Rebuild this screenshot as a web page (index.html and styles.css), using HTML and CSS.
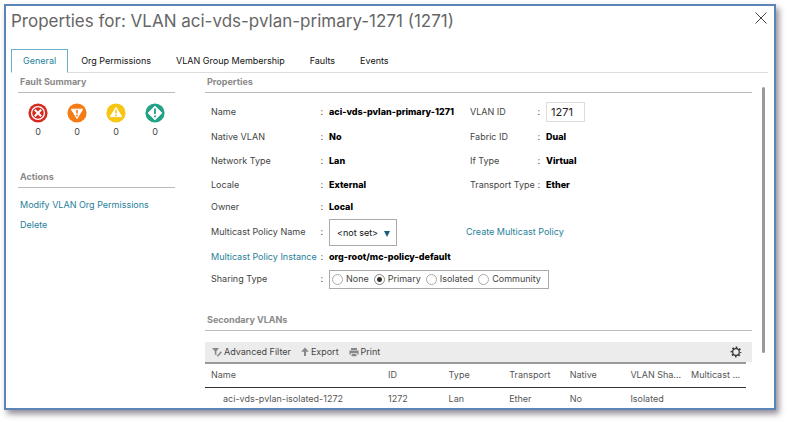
FILE: index.html
```html
<!DOCTYPE html>
<html lang="en">
<head>
  <meta charset="UTF-8" />
  <meta name="viewport" content="width=device-width, initial-scale=1" />
  <title>VLAN Properties</title>
  <link rel="stylesheet" href="styles.css">
</head>
<body>
  <div class="dialog" role="dialog" aria-labelledby="dialogTitle">
    <header class="dialog-header">
      <h1 id="dialogTitle">Properties for: VLAN aci-vds-pvlan-primary-1271 (1271)</h1>
      <button type="button" class="btn-close" aria-label="Close">
        <svg width="12" height="12" viewBox="0 0 12 12"><path d="M0.5 0.5 L11.5 11.5 M11.5 0.5 L0.5 11.5" /></svg>
      </button>
    </header>

    <nav class="tabs">
      <button type="button" class="tab active">General</button>
      <button type="button" class="tab">Org Permissions</button>
      <button type="button" class="tab">VLAN Group Membership</button>
      <button type="button" class="tab">Faults</button>
      <button type="button" class="tab">Events</button>
    </nav>

    <div class="dialog-body">
      <aside class="sidebar">
        <h2>Fault Summary</h2>
        <ul class="faults">
          <li>
            <svg width="20" height="20" viewBox="0 0 20 20">
              <circle cx="10" cy="10" r="9.6" fill="#d52b1e" />
              <circle cx="10" cy="10" r="6.4" fill="#d52b1e" stroke="#fff" stroke-width="1.3" />
              <path d="M6.8 6.8 L13.2 13.2 M13.2 6.8 L6.8 13.2" stroke="#fff" stroke-width="2" />
            </svg>
            <span>0</span>
          </li>
          <li>
            <svg width="20" height="20" viewBox="0 0 20 20">
              <circle cx="10" cy="10" r="9.6" fill="#f57c14" />
              <path d="M4.3 6.2 H15.7 L10 15.6 Z" fill="#fff" stroke="#fff" stroke-linejoin="round" />
              <path d="M10 7 V10.6 M10 11.8 V13.4" stroke="#f57c14" stroke-width="1.6" />
            </svg>
            <span>0</span>
          </li>
          <li>
            <svg width="20" height="20" viewBox="0 0 20 20">
              <circle cx="10" cy="10" r="9.6" fill="#f8c512" />
              <path d="M4.3 13.6 H15.7 L10 4.4 Z" fill="#fff" stroke="#fff" stroke-linejoin="round" />
              <path d="M10 6.8 V10.6 M10 11.6 V13.2" stroke="#f8c512" stroke-width="1.6" />
            </svg>
            <span>0</span>
          </li>
          <li>
            <svg width="20" height="20" viewBox="0 0 20 20">
              <circle cx="10" cy="10" r="9.6" fill="#23a287" />
              <path d="M10 3.2 L16.8 10 L10 16.8 L3.2 10 Z" fill="#fff" stroke="#fff" stroke-linejoin="round" />
              <path d="M10 5.4 V11 M10 12.4 V14.2" stroke="#23a287" stroke-width="1.8" />
            </svg>
            <span>0</span>
          </li>
        </ul>

        <h2>Actions</h2>
        <ul class="actions">
          <li><a href="#">Modify VLAN Org Permissions</a></li>
          <li><a href="#">Delete</a></li>
        </ul>
      </aside>

      <main class="content">
        <h2>Properties</h2>
        <form class="props">
          <div class="label">Name<span>:</span></div>
          <b>aci-vds-pvlan-primary-1271</b>
          <div class="label second"><label for="vlanId">VLAN ID</label><span>:</span></div>
          <div><input type="text" id="vlanId" value="1271" /></div>

          <div class="label">Native VLAN<span>:</span></div>
          <b>No</b>
          <div class="label second">Fabric ID<span>:</span></div>
          <b>Dual</b>

          <div class="label">Network Type<span>:</span></div>
          <b>Lan</b>
          <div class="label second">If Type<span>:</span></div>
          <b>Virtual</b>

          <div class="label">Locale<span>:</span></div>
          <b>External</b>
          <div class="label second">Transport Type<span>:</span></div>
          <b>Ether</b>

          <div class="label">Owner<span>:</span></div>
          <b class="wide">Local</b>

          <div class="label"><label for="policyName">Multicast Policy Name</label><span>:</span></div>
          <div class="select">
            <select id="policyName">
              <option>&lt;not set&gt;</option>
            </select>
            <svg width="6" height="6" viewBox="0 0 6 6"><path d="M0 0 H6 L3 6 Z" fill="#1b5e7e" /></svg>
          </div>
          <a href="#" class="create">Create Multicast Policy</a>

          <div class="label"><a href="#">Multicast Policy Instance</a><span>:</span></div>
          <b class="wide">org-root/mc-policy-default</b>

          <div class="label">Sharing Type<span>:</span></div>
          <div class="wide">
            <div class="radios" role="radiogroup" aria-label="Sharing Type">
              <label><input type="radio" name="sharing" />None</label>
              <label><input type="radio" name="sharing" checked />Primary</label>
              <label><input type="radio" name="sharing" />Isolated</label>
              <label><input type="radio" name="sharing" />Community</label>
            </div>
          </div>
        </form>

        <h2>Secondary VLANs</h2>
        <div class="toolbar">
          <button type="button">
            <svg width="10" height="10" viewBox="0 0 10 10"><path d="M0 1 H7 L4.4 4.2 V8.4 L2.8 7.2 V4.2 Z" fill="#888" /><path d="M5.4 9.2 L9.4 4.8" stroke="#888" stroke-width="1.6" /></svg>
            Advanced Filter
          </button>
          <button type="button">
            <svg width="8" height="10" viewBox="0 0 8 10"><path d="M4 0.6 L7.8 4.8 H5 V9 H3 V4.8 H0.2 Z" fill="#888" /></svg>
            Export
          </button>
          <button type="button">
            <svg width="10" height="10" viewBox="0 0 10 10"><path d="M2 1 H8 V3 H2 Z M0.4 3.6 H9.6 V7.4 H8.2 V6 H1.8 V7.4 H0.4 Z M2.6 6.8 H7.4 V9.2 H2.6 Z" fill="#888" /></svg>
            Print
          </button>
          <button type="button" class="settings" aria-label="Settings">
            <svg width="12" height="12" viewBox="0 0 12 12"><circle cx="6" cy="6" r="3.3" fill="none" stroke="#333" stroke-width="1.2" /><circle cx="6" cy="6" r="4.6" fill="none" stroke="#333" stroke-width="1.6" stroke-dasharray="1.7 1.913" stroke-dashoffset="0.85" /></svg>
          </button>
        </div>
        <table>
          <thead>
            <tr>
              <th class="name">Name</th>
              <th>ID</th>
              <th>Type</th>
              <th>Transport</th>
              <th>Native</th>
              <th>VLAN Sha...</th>
              <th class="last">Multicast ...</th>
            </tr>
          </thead>
          <tbody>
            <tr>
              <td class="name">aci-vds-pvlan-isolated-1272</td>
              <td>1272</td>
              <td>Lan</td>
              <td>Ether</td>
              <td>No</td>
              <td>Isolated</td>
              <td></td>
            </tr>
          </tbody>
        </table>
      </main>

      <div class="scrollbar"><div class="thumb"></div></div>
    </div>
  </div>
</body>
</html>
```
FILE: styles.css
```css
* {
  box-sizing: border-box;
}
body {
  margin: 0;
  padding: 4px 12px 12px 4px;
  height: 100vh;
  background: #fff;
  font-family: Inter, "Liberation Sans", sans-serif;
  font-size: 9px;
  line-height: 14px;
  color: #444;
}
ul {
  list-style: none;
  margin: 0;
  padding: 0;
}
a {
  color: #26809a;
  text-decoration: none;
}
button {
  border: none;
  background: none;
  padding: 0;
  font: inherit;
  color: inherit;
  cursor: pointer;
}
.dialog {
  display: flex;
  flex-direction: column;
  height: 100%;
  border: 2px solid #5b84b8;
  background: #fff;
  box-shadow: 3px 4px 6px rgba(60, 50, 70, 0.55);
  overflow: hidden;
}
.dialog-header {
  display: flex;
  justify-content: space-between;
  align-items: flex-start;
  padding: 3px 7px 0 5px;
  height: 43px;
}
h1 {
  margin: 0;
  font-size: 17px;
  line-height: 24px;
  font-weight: 400;
  color: #666;
}
.btn-close {
  display: flex;
  padding-top: 3px;
}
.btn-close svg {
  stroke: #444;
  stroke-width: 1;
}
.tabs {
  display: flex;
  gap: 1px;
  margin: 0 6px 0 5px;
  border-bottom: 1px solid #ddd;
}
.tab {
  height: 24px;
  padding: 0 12px;
  margin-bottom: -1px;
  color: #111;
}
.tab.active {
  padding: 0 11px;
  border: 1px solid #6aaecb;
  border-bottom-color: #fff;
  background: #fff;
  color: #26809a;
}
.dialog-body {
  display: flex;
  flex: 1;
  min-height: 0;
  padding-left: 12px;
}
h2 {
  margin: 0;
  padding: 2px 2px 3px;
  border-bottom: 1px solid #bbb;
  font-size: 9px;
  line-height: 14px;
  font-weight: 700;
  color: #8a8a8a;
}
.sidebar {
  width: 157px;
  margin-right: 30px;
}
.faults {
  display: flex;
  gap: 19px;
  padding: 10px 10px 29px;
}
.faults li {
  display: flex;
  flex-direction: column;
  align-items: center;
  gap: 2px;
}
.actions {
  padding: 10px 2px;
}
.actions li {
  margin-bottom: 6px;
}
.content {
  flex: 1;
}
.props {
  display: grid;
  grid-template-columns: 118px 137px 80px 1fr;
  grid-template-rows: 26px 24px 24px 24px 20px 30px 20px 24px;
  align-items: center;
  padding: 6px 6px 20px;
}
.props b {
  font-weight: 800;
  color: #000;
  white-space: nowrap;
}
.label {
  display: flex;
  justify-content: space-between;
  padding-right: 6px;
  white-space: nowrap;
}
.second {
  padding-left: 4px;
}
.wide {
  grid-column: span 3;
}
.create {
  grid-column: span 2;
}
#vlanId {
  display: block;
  width: 39px;
  height: 20px;
  padding: 0 4px;
  border: 1px solid #ddd;
  font: inherit;
  font-size: 11px;
  color: #222;
}
.select {
  position: relative;
  width: 68px;
}
.select select {
  display: block;
  appearance: none;
  width: 100%;
  height: 27px;
  padding: 2px 7px 0;
  border: 1px solid #aaa;
  border-radius: 0;
  background: #fff;
  font: inherit;
  color: #111;
}
.select svg {
  position: absolute;
  right: 7px;
  top: 12px;
  pointer-events: none;
}
.radios {
  display: inline-flex;
  gap: 5px;
  height: 19px;
  padding: 0 7px 0 2px;
  border: 1px solid #aaa;
  vertical-align: middle;
}
.radios label {
  display: flex;
  align-items: center;
  gap: 3px;
}
.radios input {
  appearance: none;
  width: 11px;
  height: 11px;
  margin: 0;
  border: 1px solid #aaa;
  border-radius: 50%;
}
.radios input:checked {
  border-color: #888;
  background: radial-gradient(circle, #333 2px, #fff 3px);
}
.toolbar {
  display: flex;
  align-items: center;
  gap: 10px;
  height: 20px;
  margin-top: 11px;
  padding: 0 10px 0 7px;
  background: #ececec;
}
.toolbar button {
  display: flex;
  align-items: center;
  gap: 2px;
}
.toolbar .settings {
  margin-left: auto;
}
table {
  width: calc(100% - 6px);
  table-layout: fixed;
  border-collapse: collapse;
  border-top: 2px solid #999;
}
th, td {
  height: 24px;
  padding: 0;
  text-align: left;
  font-weight: 400;
  color: #555;
  white-space: nowrap;
}
th {
  border-bottom: 1px solid #333;
}
th.name {
  width: 183px;
  padding-left: 6px;
}
th.last {
  width: 55px;
}
td.name {
  padding-left: 18px;
}
.scrollbar {
  width: 22px;
  padding: 14px 9px 0 10px;
}
.thumb {
  height: 83%;
  border-radius: 2px;
  background: #999;
}
```
